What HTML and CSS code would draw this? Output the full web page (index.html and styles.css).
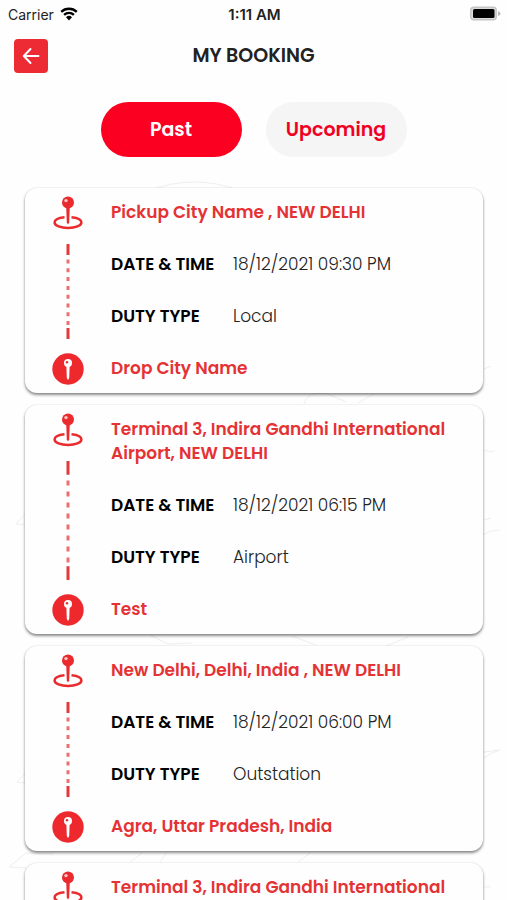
FILE: index.html
```html
<!DOCTYPE html>
<html lang="en">
<head>
<meta charset="utf-8">
<meta name="viewport" content="width=device-width, initial-scale=1">
<title>My Booking</title>
<link rel="stylesheet" href="styles.css">
</head>
<body>
<svg width="0" height="0" class="sprite" aria-hidden="true">
  <symbol id="pickup" viewBox="0 0 30 34">
    <path d="M11.500 21.300C5.600 21.900 1.600 23.700 1.600 26.500c0 3.200 6 5.500 13.400 5.500s13.400-2.300 13.400-5.500c0-2.800-4-4.600-9.900-5.200" fill="none" stroke="#eb2a2e" stroke-width="2.500"/>
    <path d="M13.200 10h3.600l-.6 16.500-1.200 2-1.200-2z" fill="#eb2a2e"/>
    <circle cx="15" cy="6.500" r="6" fill="#eb2a2e"/>
    <circle cx="13" cy="4.600" r="1.700" fill="#ffc9c9"/>
  </symbol>
  <symbol id="drop" viewBox="0 0 32 32">
    <circle cx="16" cy="16" r="15.700" fill="#ee292d"/>
    <path d="M14.300 11h3.400l-.5 14-1.200 2-1.200-2z" fill="#fff"/>
    <circle cx="16" cy="10" r="4" fill="#fff"/>
    <circle cx="15" cy="9.200" r="1.200" fill="#ee292d"/>
  </symbol>
  <symbol id="route" viewBox="0 0 4 95" preserveAspectRatio="none">
    <path d="M2 0v11M2 84v11" stroke="#e4393b" stroke-width="3"/>
    <path d="M2 15.500v4M2 24.300v4M2 33.100v4M2 41.900v4M2 50.700v4M2 59.500v4M2 68.300v4M2 77.100v4" stroke="#ee6f70" stroke-width="3"/>
  </symbol>
</svg>

<div class="screen">
  <svg class="backdrop" viewBox="0 0 507 900" preserveAspectRatio="none" aria-hidden="true">
    <path d="M150 190Q195 174 238 190M304 404q3-14 24-10l18 8M358 403l16-9M484 369l7-3M484 450q6 3 11 1M484 520l7-2M482 535q8-5 18-5M16 524l10-11M16 524l10 1M150 635l18 9 24-1M292 636l24 9M386 646l22-9M484 752l16-2M484 758q8-6 16-8M17 782l9-9M17 782l9 1M26 853l-17 14 17 1M26 853l28 1M142 853l-12 9M166 853l-6 9M310 853l-12 9M484 887h7"/>
  </svg>

  <div class="status">
    <span class="carrier">Carrier
      <svg width="18" height="14" viewBox="0 0 18 14" aria-hidden="true"><path d="M1.200 4.900a11.200 11.200 0 0 1 15.600 0M4.100 7.900a7 7 0 0 1 9.800 0" fill="none" stroke="#000" stroke-width="2.300"/><path d="M6 10.300a4.300 4.300 0 0 1 6 0L9 13.500z"/></svg>
    </span>
    <span class="clock">1:11 AM</span>
    <svg class="battery" width="32" height="16" viewBox="0 0 32 16" aria-hidden="true"><rect x="1" y="0.500" width="27" height="14" rx="4" fill="#c4c4c4"/><rect x="2.500" y="2" width="24" height="11" rx="2.500" fill="#dcdcdc"/><rect x="4" y="3" width="21.500" height="9" rx="1.500"/><path d="M29 5q2.500 1 2.500 2.500T29 10z" fill="#b5b5b5"/></svg>
  </div>

  <header class="header">
    <button class="back" type="button" aria-label="Back">
      <svg width="20" height="20" viewBox="0 0 20 20" fill="none" stroke="#fff" stroke-width="2" stroke-linecap="round" stroke-linejoin="round" aria-hidden="true"><path d="M17.500 10H3M9.500 3L2.800 10l6.700 7"/></svg>
    </button>
    <h1>MY BOOKING</h1>
  </header>

  <nav class="tabs">
    <button class="tab active" type="button">Past</button>
    <button class="tab" type="button">Upcoming</button>
  </nav>

  <main class="list">
    <article class="card">
      <div class="rail"><svg class="pickup"><use href="#pickup"/></svg><svg class="route"><use href="#route" width="100%" height="100%"/></svg><svg class="drop"><use href="#drop"/></svg></div>
      <div class="info">
        <h2>Pickup City Name , NEW DELHI</h2>
        <dl><dt>DATE &amp; TIME</dt><dd>18/12/2021 09:30 PM</dd><dt>DUTY TYPE</dt><dd>Local</dd></dl>
        <h2>Drop City Name</h2>
      </div>
    </article>
    <article class="card">
      <div class="rail"><svg class="pickup"><use href="#pickup"/></svg><svg class="route"><use href="#route" width="100%" height="100%"/></svg><svg class="drop"><use href="#drop"/></svg></div>
      <div class="info">
        <h2>Terminal 3, Indira Gandhi International Airport, NEW DELHI</h2>
        <dl><dt>DATE &amp; TIME</dt><dd>18/12/2021 06:15 PM</dd><dt>DUTY TYPE</dt><dd>Airport</dd></dl>
        <h2>Test</h2>
      </div>
    </article>
    <article class="card">
      <div class="rail"><svg class="pickup"><use href="#pickup"/></svg><svg class="route"><use href="#route" width="100%" height="100%"/></svg><svg class="drop"><use href="#drop"/></svg></div>
      <div class="info">
        <h2>New Delhi, Delhi, India , NEW DELHI</h2>
        <dl><dt>DATE &amp; TIME</dt><dd>18/12/2021 06:00 PM</dd><dt>DUTY TYPE</dt><dd>Outstation</dd></dl>
        <h2>Agra, Uttar Pradesh, India</h2>
      </div>
    </article>
    <article class="card">
      <div class="rail"><svg class="pickup"><use href="#pickup"/></svg><svg class="route"></svg></div>
      <div class="info">
        <h2>Terminal 3, Indira Gandhi International</h2>
      </div>
    </article>
  </main>
</div>
</body>
</html>
```
FILE: styles.css
```css
* { box-sizing: border-box; }

body {
  margin: 0;
  background: #fefefe;
  color: #000;
  font-family: Poppins, Inter, "Liberation Sans", sans-serif;
}

.sprite { position: absolute; }

.screen {
  position: relative;
  display: flex;
  flex-direction: column;
  height: 100vh;
  overflow: hidden;
}

.backdrop {
  position: absolute;
  inset: 0;
  width: 100%;
  height: 100%;
  fill: none;
  stroke: #edf0f0;
  stroke-width: 1;
}

.status {
  display: grid;
  grid-template-columns: 1fr auto 1fr;
  align-items: center;
  flex: none;
  height: 28px;
  padding: 0 6px 0 8px;
  font-family: Inter, sans-serif;
  font-size: 14px;
  color: #222;
}

.carrier {
  display: flex;
  align-items: center;
  gap: 6px;
}

.clock {
  font-size: 15px;
  font-weight: 600;
}

.battery { justify-self: end; }

.header {
  display: grid;
  grid-template-columns: 34px 1fr 34px;
  align-items: center;
  flex: none;
  height: 56px;
  padding: 0 14px;
}

.back {
  display: grid;
  place-items: center;
  width: 34px;
  height: 34px;
  padding: 0;
  border: 0;
  border-radius: 4px;
  background: #ec2b35;
}

h1 {
  margin: 0;
  text-align: center;
  font-size: 19px;
  font-weight: 600;
  line-height: 24px;
  color: #222;
}

.tabs {
  display: flex;
  justify-content: center;
  flex: none;
  gap: 24px;
  padding: 18px 0 17px;
}

.tab {
  width: 141px;
  height: 55px;
  padding: 0;
  border: 0;
  border-radius: 28px;
  background: #f5f5f5;
  color: #f00024;
  font: 600 19px Poppins, Inter, sans-serif;
}

.tab.active {
  background: #fb0021;
  color: #fff;
}

.list {
  position: relative;
  display: flex;
  flex-direction: column;
  flex: 1;
  gap: 12px;
  min-height: 0;
  padding: 14px 24px 14px 25px;
  overflow-y: auto;
  scrollbar-width: none;
}

.card {
  display: flex;
  flex: none;
  border-radius: 12px;
  background: #fefefe;
  box-shadow: 0 2px 3px rgba(0, 0, 0, .45), 0 0 2px rgba(0, 0, 0, .12);
}

.rail {
  display: flex;
  flex-direction: column;
  align-items: center;
  flex: none;
  gap: 14px;
  width: 86px;
  padding: 8px 0;
}

.pickup { flex: none; width: 30px; height: 34px; }
.route { flex: 1 1 0; width: 4px; min-height: 0; }
.drop { flex: none; width: 32px; height: 32px; }

.info {
  display: grid;
  flex: 1;
  gap: 28px;
  padding: 12px 24px 13px 0;
}

h2 {
  margin: 0;
  font-size: 17px;
  font-weight: 600;
  line-height: 24px;
  color: #e43235;
}

dl {
  display: grid;
  grid-template-columns: 122px 1fr;
  gap: 28px 0;
  margin: 0;
  font-size: 17px;
  line-height: 24px;
}

dt { font-weight: 600; }

dd {
  margin: 0;
  font-weight: 300;
  color: #222;
}
```
